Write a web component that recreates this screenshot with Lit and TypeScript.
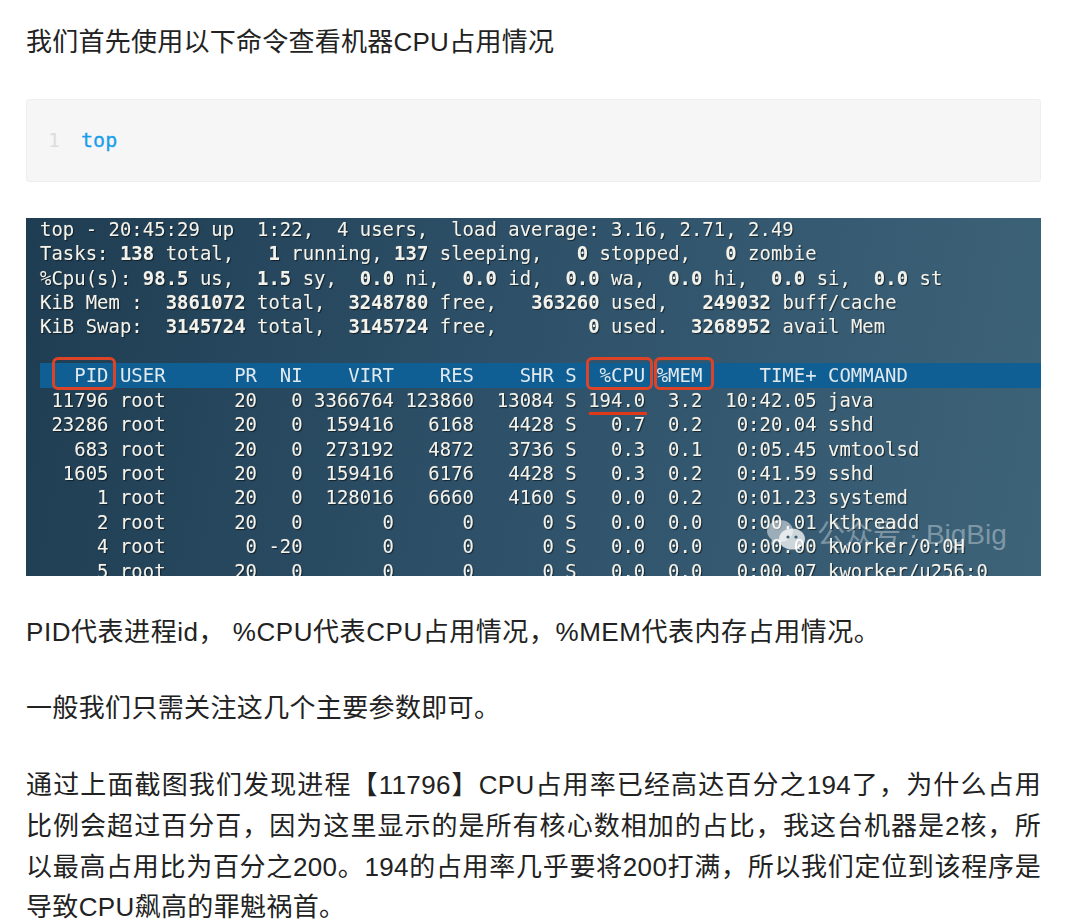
import { LitElement, html, css } from "lit";
import { customElement } from "lit/decorators.js";

const SUMMARY = [
  ["top - 20:45:29 up  1:22,  4 users,  load average: 3.16, 2.71, 2.49"],
  ["Tasks: ", "138", " total,   ", "1", " running, ", "137", " sleeping,   ", "0", " stopped,   ", "0", " zombie"],
  ["%Cpu(s): ", "98.5", " us,  ", "1.5", " sy,  ", "0.0", " ni,  ", "0.0", " id,  ", "0.0", " wa,  ", "0.0", " hi,  ", "0.0", " si,  ", "0.0", " st"],
  ["KiB Mem :  ", "3861072", " total,  ", "3248780", " free,   ", "363260", " used,   ", "249032", " buff/cache"],
  ["KiB Swap:  ", "3145724", " total,  ", "3145724", " free,        ", "0", " used.  ", "3268952", " avail Mem"],
];

const HEADER = "   PID USER      PR  NI    VIRT    RES    SHR S  %CPU %MEM     TIME+ COMMAND";

const ROWS = [
  " 11796 root      20   0 3366764 123860  13084 S 194.0  3.2  10:42.05 java",
  " 23286 root      20   0  159416   6168   4428 S   0.7  0.2   0:20.04 sshd",
  "   683 root      20   0  273192   4872   3736 S   0.3  0.1   0:05.45 vmtoolsd",
  "  1605 root      20   0  159416   6176   4428 S   0.3  0.2   0:41.59 sshd",
  "     1 root      20   0  128016   6660   4160 S   0.0  0.2   0:01.23 systemd",
  "     2 root      20   0       0      0      0 S   0.0  0.0   0:00.01 kthreadd",
  "     4 root       0 -20       0      0      0 S   0.0  0.0   0:00.00 kworker/0:0H",
  "     5 root      20   0       0      0      0 S   0.0  0.0   0:00.07 kworker/u256:0",
];

@customElement("app-root")
export class AppRoot extends LitElement {
  static styles = css`
    :host {
      display: block;
      height: 921px;
      overflow: hidden;
      background: #fff;
    }
    .article {
      padding: 22px 33px 0 26px;
      display: flex;
      flex-direction: column;
      gap: 36px;
      font-family: "Liberation Sans", "Noto Sans CJK SC", sans-serif;
      font-size: 26px;
      letter-spacing: 0.35px;
      line-height: 40.7px;
      color: #222;
    }
    p {
      margin: 0;
      text-align: justify;
    }
    .title { letter-spacing: 0.25px; }
    .wide { letter-spacing: 0.55px; }
    .code {
      height: 83px;
      box-sizing: border-box;
      background: #f6f6f6;
      border: 1px solid #eee;
      border-radius: 3px;
      display: flex;
      align-items: center;
      padding: 0 21px;
      gap: 21px;
      font-family: "DejaVu Sans Mono", monospace;
      font-size: 20px;
      letter-spacing: 0;
      line-height: 24px;
    }
    .ln { color: #ddd; }
    .kw { color: #1a9eea; -webkit-text-stroke: 0.3px #1a9eea; }
    .shot {
      position: relative;
      height: 358px;
      overflow: hidden;
      letter-spacing: 0;
      background: linear-gradient(100deg, #1f3d52 0%, #2d5068 45%, #3d6379 100%);
    }
    .term {
      margin: -1px 0 0;
      padding-left: 14px;
      font-family: "DejaVu Sans Mono", monospace;
      font-size: 18.98px;
      line-height: 24.43px;
      color: #f3f3ec;
      text-shadow: 1px 1px 1px rgba(0, 0, 0, 0.6), 0 0 1px rgba(255, 255, 255, 0.35);
      filter: blur(0.35px);
      white-space: pre;
    }
    .term b { font-weight: 700; }
    .row { display: block; height: 24.43px; }
    .head { background: #0f5f95; color: #dfe9ee; text-shadow: none; }
    .mark {
      position: absolute;
      border: 3px solid #dd4326;
      border-radius: 6px;
      box-sizing: border-box;
      top: 139px;
      height: 33px;
    }
    .pid { left: 26px; width: 64px; }
    .cpu { left: 560px; width: 67px; }
    .mem { left: 628px; width: 60px; }
    .line {
      position: absolute;
      left: 563px;
      top: 194px;
      width: 58px;
      height: 3px;
      background: #e0381a;
    }
    .wm {
      position: absolute;
      left: 741px;
      top: 299px;
      display: flex;
      align-items: center;
      gap: 12px;
      font-family: "Liberation Sans", "Noto Sans CJK SC", sans-serif;
      font-size: 28px;
      line-height: 36px;
      color: rgba(255, 255, 255, 0.36);
      white-space: pre;
    }
    .wm svg { width: 38px; height: 30px; display: block; }
  `;

  private line(parts: string[]) {
    return html`<span class="row">${parts.map((p, i) => (i % 2 ? html`<b>${p}</b>` : p))}</span>`;
  }

  render() {
    return html`
      <div class="article">
        <p class="title">我们首先使用以下命令查看机器CPU占用情况</p>
        <div class="code"><span class="ln">1</span><span class="kw">top</span></div>
        <div class="shot">
          <pre class="term">${SUMMARY.map((s) => this.line(s))}<span class="row"></span><span class="row head">${HEADER}</span>${ROWS.map(
            (r) => html`<span class="row">${r}</span>`
          )}</pre>
          <div class="mark pid"></div>
          <div class="mark cpu"></div>
          <div class="mark mem"></div>
          <div class="line"></div>
          <div class="wm">
            <svg viewBox="0 0 38 30" aria-hidden="true">
              <ellipse cx="13" cy="11" rx="13" ry="11" fill="rgba(255,255,255,.5)" />
              <path d="M5 19l-1 6 6-3z" fill="rgba(255,255,255,.5)" />
              <ellipse cx="25" cy="19" rx="13" ry="10.5" fill="rgba(255,255,255,.75)" />
              <path d="M31 26l3 4-7-2z" fill="rgba(255,255,255,.75)" />
              <circle cx="21" cy="17" r="1.6" fill="#3a5d72" />
              <circle cx="29" cy="17" r="1.6" fill="#3a5d72" />
            </svg>
            <span>公众号 · BigBig</span>
          </div>
        </div>
        <p class="wide">PID代表进程id， %CPU代表CPU占用情况，%MEM代表内存占用情况。</p>
        <p>一般我们只需关注这几个主要参数即可。</p>
        <p>通过上面截图我们发现进程【11796】CPU占用率已经高达百分之194了，为什么占用比例会超过百分百，因为这里显示的是所有核心数相加的占比，我这台机器是2核，所以最高占用比为百分之200。194的占用率几乎要将200打满，所以我们定位到该程序是导致CPU飙高的罪魁祸首。</p>
      </div>
    `;
  }
}
